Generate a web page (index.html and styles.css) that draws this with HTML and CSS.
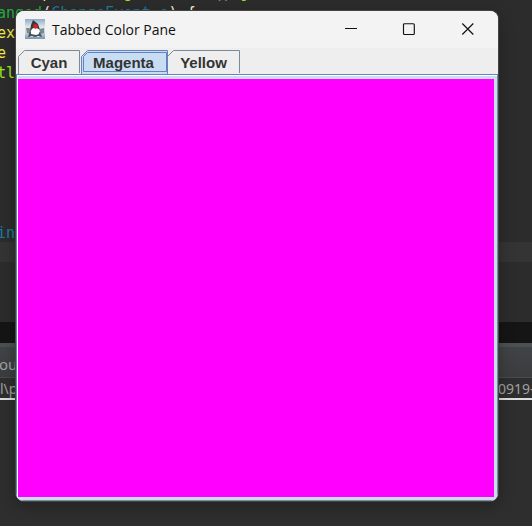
FILE: index.html
```html
<!DOCTYPE html>
<html lang="en">
<head>
<meta charset="utf-8">
<title>Tabbed Color Pane</title>
<link rel="stylesheet" href="styles.css">
</head>
<body>
<div class="desktop">
  <div class="editor">
    <div class="line first"><span class="y">     p        </span><span class="l">g</span>         () <span class="l">j</span></div>
    <div class="line"><span class="g">anged</span>(<span class="b">ChangeEvent</span> <span class="b">e</span>) {</div>
    <div class="line y">ex</div>
    <div class="line y">e</div>
    <div class="line l">tl</div>
    <div class="line b late">in</div>
    <div class="current"></div>
  </div>
  <div class="gap"></div>
  <div class="panel-head">ou</div>
  <div class="panel-path"><span>l\p</span><span class="tail">0919-</span></div>
  <div class="console"></div>

  <div class="window">
    <div class="titlebar">
      <svg class="java" width="20" height="20" viewBox="0 0 20 20">
        <defs><linearGradient id="tile" x2="0" y2="1"><stop offset="0" stop-color="#8fabc6"/><stop offset=".4" stop-color="#dfe7ec"/><stop offset=".7" stop-color="#c3d0da"/><stop offset="1" stop-color="#7596b2"/></linearGradient></defs>
        <rect width="20" height="20" fill="url(#tile)"/>
        <path d="M1 9h3l3 2-2 4-3-1zM19 9l-4 1-1 3 2 2 3-1z" fill="#7d878e"/>
        <path d="M7 10h7l2 7-3 1-3-2-3 2-3-1z" fill="#fff"/>
        <path d="M8 1l5 4 2 6-3-2H8l-3 3 1-6z" fill="#35383c"/>
        <path d="M5 12l2 3 5 0 3-2 2 5-4-1-3 1-3-1-4 1z" fill="#4a5056"/>
        <path d="M7 10l6 0 1 5-3 1-5-1z" fill="#fff"/>
        <circle cx="10.5" cy="7.3" r="2.4" fill="#cf2522"/>
      </svg>
      <span class="title">Tabbed Color Pane</span>
      <svg class="controls" width="130" height="14" viewBox="0 0 130 14" fill="none" stroke="#111" stroke-width="1.15">
        <path d="M1 5.5h12"/><rect x="59.5" y=".7" width="10.8" height="10.8" rx="1"/><path d="M118.3.5l11 11m0-11l-11 11"/>
      </svg>
    </div>
    <div class="tabs">
      <div class="tab cyan"><svg width="62" height="24"><path d="M.5 24V6.5l6-6h55V23" /></svg><span>Cyan</span></div>
      <div class="tab magenta"><svg width="87" height="24"><path class="fill" d="M.5 24V6.5l6-6h80V24"/><path class="focus" d="M2.5 21.5V6.5l4-4h79v19z"/></svg><span>Magenta</span></div>
      <div class="tab yellow"><svg width="73" height="24"><path d="M.5 6.5l6-6h66V23"/></svg><span>Yellow</span></div>
    </div>
    <div class="pane"><div class="color"></div></div>
  </div>
</div>
</body>
</html>
```
FILE: styles.css
```css
body { margin: 0; overflow: hidden; background: #2d2d2d; }
.desktop { position: relative; width: 532px; height: 526px; overflow: hidden; display: flex; flex-direction: column; }
.editor { box-sizing: border-box; height: 322px; flex: none; overflow: hidden; background: #2c2c2c; font: 15px/20px "DejaVu Sans Mono", monospace; color: #f5f5e5; }
.line { height: 20px; margin-left: -3px; white-space: pre; }
.first { margin-top: -17px; }
.late { margin-top: 140px; }
.y { color: #f0ec42; }
.g { color: #20ac3c; }
.l { color: #9ae81c; }
.b { color: #1a7ba3; }
.current { height: 20px; margin-top: -1px; background: #343434; }
.gap { height: 21px; flex: none; background: #151515; }
.panel-head, .panel-path { box-sizing: border-box; flex: none; font: 15px/22px "Noto Sans", sans-serif; color: #a0a0a0; white-space: pre; }
.panel-head { height: 34px; padding-top: 6px; margin-left: -2px; padding-left: 1px; border-top: 4px solid #4b5052; background: linear-gradient(#414446, #3a3c3d); }
.panel-path { display: flex; justify-content: space-between; height: 23px; border-top: 1px solid #484a4b; border-bottom: 2px solid #ddd; background: #2e2e2e; font-size: 14px; line-height: 21px; }
.tail { width: 34px; }
.console { flex: 1; background: #2e2e2e; }
.window { position: absolute; left: 16px; top: 11px; width: 482px; height: 490px; display: flex; flex-direction: column; overflow: hidden; border-radius: 8px; background: #eee; box-shadow: 0 0 0 1px #444, 0 4px 16px rgba(0, 0, 0, .3); }
.titlebar { display: flex; align-items: center; height: 37px; flex: none; box-sizing: border-box; padding: 0 24px 1px 9px; background: #f3f3f3; }
.title { margin: 2px 0 0 7px; font: 14px/20px "Open Sans", sans-serif; color: #111; white-space: nowrap; }
.controls { margin-left: auto; margin-top: 2px; }
.tabs { box-sizing: border-box; display: flex; height: 26px; flex: none; padding: 2px 0 0 2px; background: #eee; }
.tab { position: relative; flex: none; height: 24px; text-align: center; font: bold 15px/25px "Liberation Sans", sans-serif; color: #333; }
.tab svg { position: absolute; left: 0; top: 0; fill: none; stroke: #7a8a99; }
.tab span { position: relative; }
.cyan { width: 62px; }
.magenta { width: 85px; margin-left: 1px; }
.yellow { width: 73px; margin-left: 1px; }
.tab .fill { fill: #c8ddf2; stroke: #6382bf; }
.tab .focus { stroke: #6382bf; }
.pane { box-sizing: border-box; flex: 1; display: flex; padding: 3px 3px 3px 0; border: 1px solid #6382bf; border-bottom-color: #7a8a99; border-right-color: #7a8a99; background: #c8ddf2; box-shadow: inset 1px 1px #fff; }
.color { flex: 1; margin: 1px 0 0 1px; background: #f0f; }
```
